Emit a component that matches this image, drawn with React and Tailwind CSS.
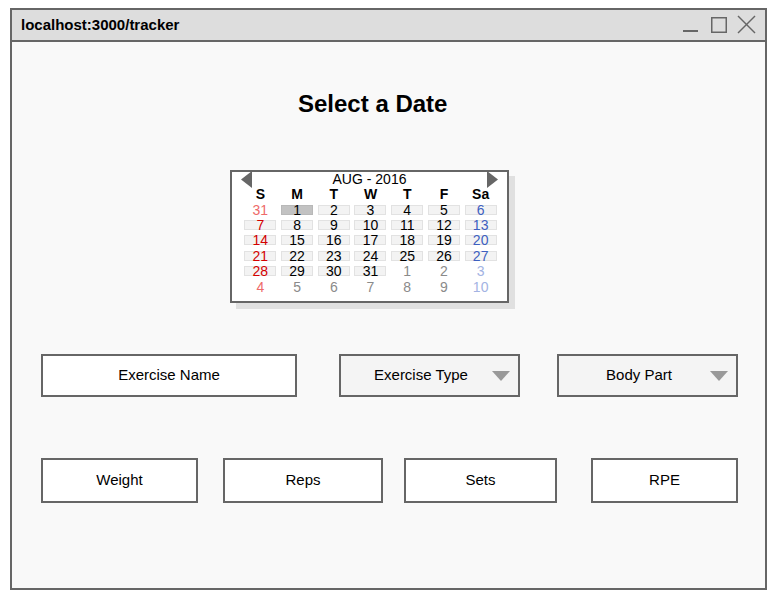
import React from 'react'

const FONT = { fontFamily: '"Liberation Sans", Arial, sans-serif' }

// calendar rows: [day, kind] kind: 'prev' | 'cur' | 'next'
const weeks = [
  [[31, 'prev'], [1, 'cur'], [2, 'cur'], [3, 'cur'], [4, 'cur'], [5, 'cur'], [6, 'cur']],
  [[7, 'cur'], [8, 'cur'], [9, 'cur'], [10, 'cur'], [11, 'cur'], [12, 'cur'], [13, 'cur']],
  [[14, 'cur'], [15, 'cur'], [16, 'cur'], [17, 'cur'], [18, 'cur'], [19, 'cur'], [20, 'cur']],
  [[21, 'cur'], [22, 'cur'], [23, 'cur'], [24, 'cur'], [25, 'cur'], [26, 'cur'], [27, 'cur']],
  [[28, 'cur'], [29, 'cur'], [30, 'cur'], [31, 'cur'], [1, 'next'], [2, 'next'], [3, 'next']],
  [[4, 'next'], [5, 'next'], [6, 'next'], [7, 'next'], [8, 'next'], [9, 'next'], [10, 'next']],
]

const dayColor = (col, kind) => {
  if (kind === 'cur') {
    if (col === 0) return 'text-[#d40000]'
    if (col === 6) return 'text-[#3d5fc0]'
    return 'text-black'
  }
  if (col === 0) return 'text-[#ee6a6a]'
  if (col === 6) return 'text-[#a3b3e3]'
  return 'text-[#8a8a8a]'
}

const Caret = () => (
  <svg width="18" height="10" viewBox="0 0 18 10" className="mr-[8px] shrink-0">
    <polygon points="0,0 18,0 9,10" fill="#999999" />
  </svg>
)

const Calendar = () => (
  <div className="ml-[218px] mt-[52px] w-[279px] h-[133px] border-2 border-[#666666] bg-white shadow-[6px_6px_0_#e0e0e0] flex flex-col">
    <div className="h-[15px] flex items-center justify-between px-[9px]">
      <svg width="11" height="17" viewBox="0 0 11 17">
        <polygon points="11,0 11,17 0,8.5" fill="#666666" />
      </svg>
      <span className="text-[14px] leading-[15px] text-black">AUG - 2016</span>
      <svg width="11" height="17" viewBox="0 0 11 17">
        <polygon points="0,0 0,17 11,8.5" fill="#666666" />
      </svg>
    </div>
    <div className="grid grid-cols-7 w-[257px] ml-[10px]">
      {['S', 'M', 'T', 'W', 'T', 'F', 'Sa'].map((d, i) => (
        <div key={i} className="h-[15px] flex items-center justify-center text-[14px] font-bold text-black">
          {d}
        </div>
      ))}
      {weeks.map((week, r) =>
        week.map(([d, kind], c) => {
          const boxed = kind === 'cur'
          const selected = kind === 'cur' && d === 1
          return (
            <div key={`${r}-${c}`} className="h-[15.4px] flex items-center justify-center">
              <span
                className={`w-[32px] h-[10px] flex items-center justify-center text-[14px] leading-[14px] ${dayColor(c, kind)} ${
                  selected
                    ? 'bg-[#c2c2c2] border border-[#b8b8b8]'
                    : boxed
                    ? 'bg-[#f3f3f3] border border-[#e2e2e2]'
                    : 'border border-transparent'
                }`}
              >
                {d}
              </span>
            </div>
          )
        })
      )}
    </div>
  </div>
)

const Field = ({ label, className }) => (
  <div className={`border-2 border-[#666666] bg-white flex items-center justify-center text-[15px] text-black ${className}`}>
    {label}
  </div>
)

const Select = ({ label, className }) => (
  <div className={`border-2 border-[#666666] bg-[#f4f4f4] flex items-center text-[15px] text-black ${className}`}>
    <span className="flex-1 text-center pl-[9px]">{label}</span>
    <Caret />
  </div>
)

export default function App() {
  return (
    <div className="w-[777px] h-[602px] bg-white pt-[8px] pl-[10px]" style={FONT}>
      <div className="w-[757px] h-[582px] border-2 border-[#666666] flex flex-col">
        {/* title bar */}
        <div className="h-[32px] shrink-0 bg-[#dddddd] border-b-2 border-[#666666] flex items-center pl-[9px]">
          <span className="text-[15px] font-bold text-black">localhost:3000/tracker</span>
          <svg width="75" height="22" viewBox="0 0 75 22" className="ml-auto mr-[9px]">
            <line x1="2" y1="17" x2="17" y2="17" stroke="#666666" strokeWidth="2" />
            <rect x="30.75" y="3.75" width="14.5" height="14.5" fill="none" stroke="#666666" strokeWidth="1.5" />
            <line x1="57" y1="2" x2="74" y2="19" stroke="#666666" strokeWidth="1.5" />
            <line x1="74" y1="2" x2="57" y2="19" stroke="#666666" strokeWidth="1.5" />
          </svg>
        </div>

        {/* content */}
        <div className="flex-1 bg-[#f9f9f9] flex flex-col">
          <h1 className="ml-[286px] mt-[48px] h-[28px] leading-[28px] text-[24px] font-bold text-black">
            Select a Date
          </h1>

          <Calendar />

          <div className="flex mt-[51px]">
            <Field label="Exercise Name" className="ml-[29px] w-[256px] h-[43px]" />
            <Select label="Exercise Type" className="ml-[42px] w-[181px] h-[43px]" />
            <Select label="Body Part" className="ml-[37px] w-[181px] h-[43px]" />
          </div>

          <div className="flex mt-[61px]">
            <Field label="Weight" className="ml-[29px] w-[157px] h-[45px]" />
            <Field label="Reps" className="ml-[25px] w-[160px] h-[45px]" />
            <Field label="Sets" className="ml-[21px] w-[153px] h-[45px]" />
            <Field label="RPE" className="ml-[34px] w-[147px] h-[45px]" />
          </div>
        </div>
      </div>
    </div>
  )
}
